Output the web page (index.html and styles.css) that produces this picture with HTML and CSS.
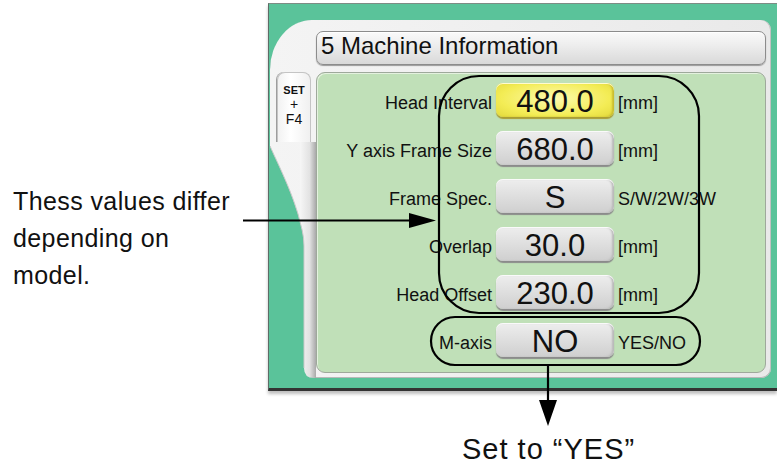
FILE: index.html
```html
<!DOCTYPE html>
<html lang="en">
<head>
  <meta charset="UTF-8" />
  <title>5 Machine Information</title>
  <meta name="viewport" content="width=device-width, initial-scale=1.0" />
  <link rel="stylesheet" href="styles.css">
</head>
<body>
  <div class="page">
    <p class="note">Thess values differ<br>depending on<br>model.</p>

    <div class="screen">
      <div class="frame">
        <div class="title">5 Machine Information</div>

        <div class="side">
          <div class="tab">
            <span class="key-set">SET</span>
            <span class="key-plus">+</span>
            <span class="key-f4">F4</span>
          </div>
          <svg class="sweep" viewBox="0 0 46 236" preserveAspectRatio="none">
            <defs>
              <linearGradient id="strip" x1="0" x2="1" y1="0" y2="0">
                <stop offset="0" stop-color="#f6f6f6" />
                <stop offset="0.6" stop-color="#e2e2e2" />
                <stop offset="1" stop-color="#a9a9a9" />
              </linearGradient>
            </defs>
            <rect x="30" y="0" width="16" height="236" fill="url(#strip)" />
            <path d="M0,0 L0,4 C6,18 20,45 28,72 C31,84 34,92 34,104 L34,226 Q34,236 44,236 L0,236 Z" fill="#5ac39a" />
            <path d="M0,4 C6,18 20,45 28,72 C31,84 34,92 34,104 L34,226" fill="none" stroke="#c9c9c9" stroke-width="1" />
          </svg>
        </div>

        <div class="content">
          <span class="label">Head Interval</span>
          <span class="val hot">480.0</span>
          <span class="unit">[mm]</span>

          <span class="label">Y axis Frame Size</span>
          <span class="val">680.0</span>
          <span class="unit">[mm]</span>

          <span class="label">Frame Spec.</span>
          <span class="val">S</span>
          <span class="unit">S/W/2W/3W</span>

          <span class="label">Overlap</span>
          <span class="val">30.0</span>
          <span class="unit">[mm]</span>

          <span class="label">Head Offset</span>
          <span class="val">230.0</span>
          <span class="unit">[mm]</span>

          <span class="label">M-axis</span>
          <span class="val">NO</span>
          <span class="unit">YES/NO</span>
        </div>
      </div>
    </div>

    <p class="caption">Set to “YES”</p>
  </div>

  <!-- callout marks drawn over the screenshot -->
  <svg class="marks" width="777" height="468" viewBox="0 0 777 468">
    <rect x="439" y="76" width="260" height="237" rx="40" ry="40" fill="none" stroke="#000" stroke-width="2.2" />
    <rect x="431" y="317" width="269" height="48" rx="24" ry="24" fill="none" stroke="#000" stroke-width="2.2" />
    <line x1="243" y1="220.5" x2="414" y2="220.5" stroke="#000" stroke-width="2.2" />
    <polygon points="409,213 436,220.5 409,228" fill="#000" />
    <line x1="548" y1="365" x2="548" y2="402" stroke="#000" stroke-width="2.2" />
    <polygon points="539,400 557,400 548,426" fill="#000" />
  </svg>
</body>
</html>
```

FILE: styles.css
```css
body {
  margin: 0;
  background: white;
  font-family: 'Liberation Sans', Arial, sans-serif;
  color: #111;
}
.page {
  display: grid;
  grid-template-columns: 268px 509px;
  width: 777px;
  height: 468px;
  align-items: start;
}
.note {
  margin: 0;
  padding: 183px 0 0 13px;
  font-size: 25px;
  line-height: 37px;
  letter-spacing: 0.4px;
}
.screen {
  box-sizing: border-box;
  margin-top: 3px;
  padding: 16px 6px 10px 1px;
  background: #5ac39a;
  border-top: 1px solid #7d8c85;
  border-left: 1px solid #5f6b66;
  border-bottom: 3px solid #333;
  box-shadow: 0 3px 3px rgba(0, 0, 0, 0.25);
}
.frame {
  display: grid;
  grid-template-columns: 46px 1fr;
  grid-template-rows: 34px 1fr;
  row-gap: 7px;
  height: 358px;
  box-sizing: border-box;
  padding: 11px 5px 0 0;
  background: linear-gradient(to right, #f4f4f4, #e9e9e9);
  border-radius: 42px 10px 10px 10px / 50px 10px 10px 10px;
  box-shadow: inset 0 -1px 0 #b9b9b9, inset -1px 0 0 #c2c2c2;
}
.title {
  grid-column: 2;
  box-sizing: border-box;
  height: 34px;
  padding: 0 5px 4px 4px;
  font-size: 24px;
  line-height: 28px;
  background: linear-gradient(#fafafa, #ececec 45%, #d9d9d9);
  border: 1px solid #8c8c8c;
  border-radius: 7px;
  box-shadow: inset 0 1px 0 #fff, 0 1px 1px #9a9a9a;
}
.side {
  grid-column: 1;
  grid-row: 2;
  display: flex;
  flex-direction: column;
}
.tab {
  box-sizing: border-box;
  width: 34px;
  height: 70px;
  margin-left: 7px;
  padding-top: 11px;
  display: flex;
  flex-direction: column;
  align-items: center;
  background: linear-gradient(to right, #f2f2f2, #ffffff 40%, #f0f0f0);
  border: 1px solid #c4c4c4;
  border-bottom: none;
  border-radius: 8px 8px 0 0;
  box-shadow: -1px 0 0 #9d9d9d;
}
.key-set {
  font-size: 11px;
  font-weight: bold;
  line-height: 13px;
}
.key-plus {
  font-size: 14px;
  line-height: 14px;
}
.key-f4 {
  font-size: 14px;
  line-height: 16px;
}
.sweep {
  flex: 1;
  width: 46px;
  display: block;
}
.content {
  grid-column: 2;
  grid-row: 2;
  margin-bottom: 5px;
  display: grid;
  grid-template-columns: 175px 118px auto;
  grid-auto-rows: 34px;
  column-gap: 4px;
  row-gap: 14px;
  align-content: start;
  padding-top: 10px;
  background: #c0e0b8;
  border: 1px solid #9ea99b;
  border-radius: 9px;
  box-shadow: inset 1px 1px 0 #e4f1df;
}
.label,
.unit {
  font-size: 18px;
  line-height: 34px;
  padding-top: 3px;
  box-sizing: border-box;
  white-space: nowrap;
}
.label {
  text-align: right;
}
.val {
  box-sizing: border-box;
  height: 34px;
  padding-top: 2px;
  font-size: 31px;
  line-height: 34px;
  text-align: center;
  background: linear-gradient(#eeeeee, #dddddd 55%, #cfcfcf);
  border-radius: 7px;
  box-shadow: inset 0 1px 0 #fafafa, inset -2px 0 2px #b9b9b9, 0 2px 1px #8b8b8b;
}
.val.hot {
  background: radial-gradient(ellipse at 50% 45%, #fdfab0, #f3ec55 65%, #e2d83c);
  box-shadow: inset 0 1px 0 #fffbd0, inset -2px 0 2px #c9bd2f, 0 2px 1px #a99d35;
}
.caption {
  grid-column: 2;
  margin: 39px 0 0;
  padding-left: 194px;
  font-size: 29px;
  line-height: 34px;
  letter-spacing: 1px;
}
.marks {
  position: absolute;
  left: 0;
  top: 0;
  pointer-events: none;
}
```
